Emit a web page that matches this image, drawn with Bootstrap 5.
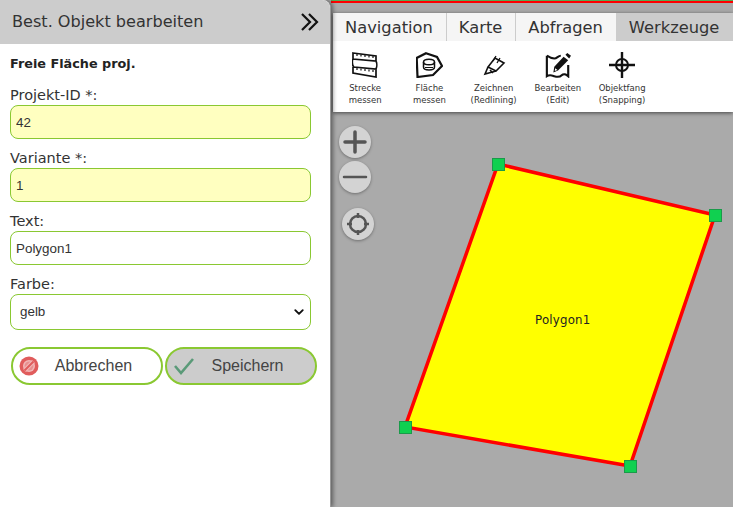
<!doctype html>
<html lang="de">
<head>
<meta charset="utf-8">
<title>Objekt bearbeiten</title>
<link href="https://cdn.jsdelivr.net/npm/bootstrap@5.3.3/dist/css/bootstrap.min.css" rel="stylesheet">
<style>
html, body { height: 100%; margin: 0; overflow: hidden; }
body { font-family: "DejaVu Sans", sans-serif; background: #aaa; color: #333; }
.app-shell { height: 507px; width: 733px; }
.side-panel { width: 331px; height: 507px; flex: none; background: #fff; border-right: 1px solid #999; box-shadow: 2px 0 4px rgba(0,0,0,.45); border-top-right-radius: 8px; z-index: 2; }
.panel-head { height: 44px; background: #ccc; padding: 0 11px 0 12px; font-size: 16.1px; color: #333; border-top-right-radius: 8px; }
.panel-body { padding: 12px 19px 0 10px; }
.obj-type { font-size: 12.8px; font-weight: 700; color: #222; line-height: 16px; margin-bottom: 15px; }
.field-label { font-size: 14.5px; line-height: 17px; margin-bottom: 1px; color: #333; display: block; }
.field-row { margin-bottom: 11px; }
.field-input.form-control, .field-input.form-select { height: 34px; min-height: 0; border: 1px solid #8ac832; border-radius: 8px; font-family: "Liberation Sans", sans-serif; font-size: 13.4px; color: #333; padding: 0 5px; box-shadow: none; }
.field-input.form-select { height: 36px; padding-left: 9px; background-position: right 5px center; background-size: 12px 10px; --bs-form-select-bg-img: none; background-image: url("data:image/svg+xml,%3csvg xmlns='http://www.w3.org/2000/svg' viewBox='0 0 16 16'%3e%3cpath fill='none' stroke='%23111' stroke-linecap='round' stroke-linejoin='round' stroke-width='3' d='m2 5 6 6 6-6'/%3e%3c/svg%3e"); }
.field-req { background: #ffffc0; }
.action-row { padding: 6px 0 0 1px; gap: 2px; margin-right: -6px; }
.action-btn { width: 152px; height: 38px; border: 2px solid #8ac832; border-radius: 19px; background: #fff; font-family: "Liberation Sans", sans-serif; font-size: 16px; color: #444; padding: 0; position: relative; }
.action-btn svg { position: absolute; left: 6px; top: 7px; }
.action-btn span { display: block; text-align: center; padding-left: 13px; }
.action-save { background: #ccc; }
.map-area { position: relative; flex: 1; background: #aaa; overflow: hidden; }
.top-line { height: 3px; background: #f00; border-top: 1px solid #5a5; }
.tool-box { margin: 10px 0 0 2px; background: #fff; box-shadow: 0 1px 4px rgba(0,0,0,.6); height: 99px; }
.tool-tabs { height: 28px; background: #f5f5f5; }
.tool-tab { font-size: 16.3px; color: #333; padding: 0 13px 0 12px; line-height: 29px; border-right: 1px solid #ccc; white-space: nowrap; }
.tool-tab-on { background: #ccc; border-right: 0; flex: 1; padding: 0 12px; }
.tool-list { padding: 11px 0 0 0; }
.tool-item { width: 64.250px; text-align: center; font-size: 8.5px; line-height: 12px; color: #333; }
.tool-item svg { display: block; margin: 0 auto 4px; }
.map-btn { position: absolute; width: 32px; height: 32px; border-radius: 50%; background: #d3d3d3; box-shadow: 0 1px 3px rgba(0,0,0,.35); left: 8px; }
.map-shape { position: absolute; left: 0; top: 0; }
.shape-text { font-family: "DejaVu Sans", sans-serif; font-size: 11.8px; letter-spacing: .2px; fill: #222; }
</style>
</head>
<body>
<div class="app-shell d-flex">
  <div class="side-panel">
    <div class="panel-head d-flex align-items-center justify-content-between">
      <span>Best. Objekt bearbeiten</span>
      <svg width="18" height="18" viewBox="0 0 18 18" fill="none" stroke="#111" stroke-width="2.200"><path d="M1 1l8 8-8 8M8 1l8 8-8 8"/></svg>
    </div>
    <form class="panel-body">
      <div class="obj-type">Freie Fläche proj.</div>
      <div class="field-row">
        <label class="field-label" for="projekt">Projekt-ID *:</label>
        <input class="form-control field-input field-req" id="projekt" value="42">
      </div>
      <div class="field-row">
        <label class="field-label" for="variante">Variante *:</label>
        <input class="form-control field-input field-req" id="variante" value="1">
      </div>
      <div class="field-row">
        <label class="field-label" for="text">Text:</label>
        <input class="form-control field-input" id="text" value="Polygon1">
      </div>
      <div class="field-row">
        <label class="field-label" for="farbe">Farbe:</label>
        <select class="form-select field-input" id="farbe"><option>gelb</option></select>
      </div>
      <div class="action-row d-flex">
        <button type="button" class="btn action-btn">
          <svg width="20" height="20" viewBox="0 0 20 20"><circle cx="10" cy="10" r="9.500" fill="#e05c5c"/><circle cx="10" cy="10" r="6" fill="#f2b8b8"/><circle cx="10" cy="10" r="4.500" fill="#e89090"/><path d="M5.500 14.500l9-9" stroke="#f2b8b8" stroke-width="4"/><path d="M5.500 14.500l9-9" stroke="#e05c5c" stroke-width="2"/></svg>
          <span>Abbrechen</span>
        </button>
        <button type="button" class="btn action-btn action-save">
          <svg width="22" height="20" viewBox="0 0 22 20" fill="none" stroke="#5a9a78" stroke-width="2.600"><path d="M2 10l6 7L20 3"/></svg>
          <span>Speichern</span>
        </button>
      </div>
    </form>
  </div>
  <div class="map-area">
    <svg class="map-shape" width="402" height="507" viewBox="331 0 402 507">
      <polygon points="498,164 715,215 630,466 405,427" fill="#ff0" stroke="#f00" stroke-width="3.500"/>
      <g fill="#10d050" stroke="#1a9a4a" stroke-width="1">
        <rect x="492.500" y="158.500" width="12" height="12"/>
        <rect x="709.500" y="209.500" width="12" height="12"/>
        <rect x="624.500" y="460.500" width="12" height="12"/>
        <rect x="399.500" y="421.500" width="12" height="12"/>
      </g>
      <text class="shape-text" x="535" y="324">Polygon1</text>
    </svg>
    <div class="top-line position-relative"></div>
    <div class="tool-box position-relative">
      <div class="tool-tabs d-flex">
        <div class="tool-tab">Navigation</div>
        <div class="tool-tab">Karte</div>
        <div class="tool-tab">Abfragen</div>
        <div class="tool-tab tool-tab-on">Werkzeuge</div>
      </div>
      <div class="tool-list d-flex">
        <div class="tool-item">
          <svg width="26" height="26" viewBox="0 0 26 26" fill="none" stroke="#111" stroke-width="1.700"><path d="M1 1l23 3v5L1 7zM1 7c-1 1-1 7 1 8l22 2c1-2 1-6 0-8M1 15v6l23 4v-8"/><path d="M5 2v2M9 2.500v2M13 3v2M17 3.500v2M21 4v2M5 16v2M9 16.500v2M13 17v2M17 17.500v2M21 18v2" stroke-width="1.200"/></svg>
          Strecke<br>messen
        </div>
        <div class="tool-item">
          <svg width="27" height="26" viewBox="0 0 27 26" fill="none" stroke="#111" stroke-width="2.200"><path d="M10 1.200l11 3.800 5 9-9 9-15.500 2-.8-19z"/><ellipse cx="13" cy="10" rx="5.500" ry="2.800" stroke-width="1.500"/><path d="M7.500 10v5c0 4 11 4 11 0v-5" stroke-width="1.500"/><path d="M9 15.500h8" stroke-width="1"/></svg>
          Fläche<br>messen
        </div>
        <div class="tool-item">
          <svg width="26" height="26" viewBox="0 0 26 26" fill="none" stroke="#111" stroke-width="1.600"><path d="M7 15L14 6l9 5-8 8zM7 15l-3 7 11-3M9 18l3 3"/><path d="M15 4l-3 5M19 6l-3 5" stroke-width="1.300"/></svg>
          Zeichnen<br>(Redlining)
        </div>
        <div class="tool-item">
          <svg width="26" height="26" viewBox="0 0 28 28"><path d="M2 4c3 2 5 3 8 3s4-3 7-3M2 4v22c3-2 5-1 8 0s6 1 8-1 5-1 7 1V14" fill="none" stroke="#111" stroke-width="2.300"/><path d="M9 22l1-6L20 5l5 4-11 11z" fill="#111"/><path d="M10.500 20.500l.5-3 2.500 2z" fill="#fff"/><path d="M22 3l2-2 4 3-2 3z" fill="#111"/></svg>
          Bearbeiten<br>(Edit)
        </div>
        <div class="tool-item">
          <svg width="26" height="26" viewBox="0 0 26 26" fill="none" stroke="#111"><circle cx="13" cy="13" r="6" stroke-width="2"/><path d="M13 0v26M0 13h26" stroke-width="2.400"/></svg>
          Objektfang<br>(Snapping)
        </div>
      </div>
    </div>
    <div class="map-btn" style="top:126px">
      <svg width="32" height="32" viewBox="0 0 32 32" stroke="#555" stroke-width="3.500" stroke-linecap="round"><path d="M16 6v20M6 16h20"/></svg>
    </div>
    <div class="map-btn" style="top:161px">
      <svg width="32" height="32" viewBox="0 0 32 32" stroke="#555" stroke-width="2.500" stroke-linecap="round"><path d="M5 16h22"/></svg>
    </div>
    <div class="map-btn" style="top:208px;left:11px">
      <svg width="32" height="32" viewBox="0 0 32 32" fill="none" stroke="#555" stroke-width="2.500"><circle cx="16" cy="16" r="8"/><path d="M16 5v5M16 22v5M5 16h5M22 16h5"/></svg>
    </div>
  </div>
</div>
</body>
</html>
